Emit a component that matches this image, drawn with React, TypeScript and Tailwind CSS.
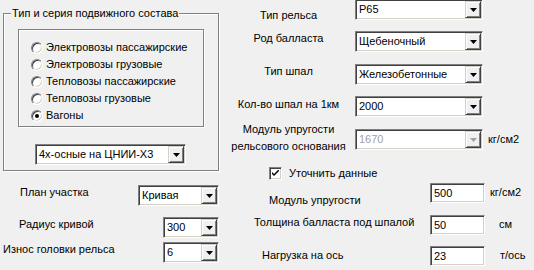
import type { ReactNode } from 'react'

const sunken =
  'border border-t-[#808080] border-l-[#808080] border-b-white border-r-white shadow-[inset_1px_1px_0_#404040,inset_-1px_-1px_0_#d4d0c8]'

function Arrow({ disabled }: { disabled?: boolean }) {
  return (
    <div className="flex h-full w-[16px] shrink-0 items-center justify-center border border-t-[#d4d0c8] border-l-[#d4d0c8] border-b-[#404040] border-r-[#404040] bg-[#f0f0f0] shadow-[inset_1px_1px_0_#fff,inset_-1px_-1px_0_#808080]">
      <svg width="7" height="4" viewBox="0 0 7 4">
        <path d="M0 0h7L3.5 4z" fill={disabled ? '#a0a0a0' : '#000'} />
      </svg>
    </div>
  )
}

function Combo({ value, width, disabled }: { value: string; width: string; disabled?: boolean }) {
  return (
    <div className={`flex h-[21px] ${width} shrink-0 bg-white p-[1px] ${sunken}`}>
      <div className={`flex flex-1 items-center pl-[2px] ${disabled ? 'text-[#a0a0a0]' : 'text-black'}`}>
        {value}
      </div>
      <Arrow disabled={disabled} />
    </div>
  )
}

function Edit({ value }: { value: string }) {
  return (
    <div className={`flex h-[20px] w-[55px] shrink-0 items-center bg-white pl-[3px] ${sunken}`}>{value}</div>
  )
}

function Radio({ label, checked }: { label: string; checked?: boolean }) {
  return (
    <div className="flex h-[17px] items-center">
      <div className="ml-[12px] flex h-[12px] w-[12px] items-center justify-center rounded-full border border-t-[#808080] border-l-[#808080] border-b-white border-r-white bg-white shadow-[inset_1px_1px_0_#404040,inset_-1px_-1px_0_#d4d0c8]">
        {checked && <div className="h-[4px] w-[4px] rounded-full bg-black" />}
      </div>
      <span className="ml-[3px]">{label}</span>
    </div>
  )
}

function Row({ children, className }: { children: ReactNode; className?: string }) {
  return <div className={`flex ${className ?? ''}`}>{children}</div>
}

export default function App() {
  return (
    <div
      className="flex h-[270px] w-[534px] overflow-hidden bg-[#f0f0f0] text-[11px] leading-[13px] text-black"
      style={{ fontFamily: '"Liberation Sans", Arial, sans-serif' }}
    >
      {/* left column */}
      <div className="flex w-[222px] shrink-0 flex-col">
        <div className="relative ml-[3px] mt-[13px] h-[158px] w-[216px] border border-[#808080] shadow-[inset_1px_1px_0_#fff,1px_1px_0_#fff]">
          <span className="absolute left-[7px] top-[-7px] bg-[#f0f0f0] px-[1px]">Тип и серия подвижного состава</span>
          <div className="ml-[14px] mt-[15px] flex h-[98px] w-[186px] flex-col border border-[#808080] pt-[9px] shadow-[inset_1px_1px_0_#fff,1px_1px_0_#fff]">
            <Radio label="Электровозы пассажирские" />
            <Radio label="Электровозы грузовые" />
            <Radio label="Тепловозы пассажирские" />
            <Radio label="Тепловозы грузовые" />
            <Radio label="Вагоны" checked />
          </div>
          <div className="ml-[31px] mt-[17px]">
            <Combo value="4х-осные на ЦНИИ-Х3" width="w-[151px]" />
          </div>
        </div>

        <Row className="mt-[14px] h-[21px]">
          <span className="ml-[20px] w-[118px] pt-[1px]">План участка</span>
          <Combo value="Кривая" width="w-[81px]" />
        </Row>
        <Row className="mt-[11px] h-[20px]">
          <span className="ml-[19px] w-[144px] pt-[1px]">Радиус кривой</span>
          <Combo value="300" width="w-[56px]" />
        </Row>
        <Row className="mt-[5px] h-[20px]">
          <span className="ml-[3px] w-[160px] pt-[1px]">Износ головки рельса</span>
          <Combo value="6" width="w-[56px]" />
        </Row>
      </div>

      {/* right column */}
      <div className="flex flex-1 flex-col">
        <Row className="-mt-[1px] h-[21px]">
          <span className="w-[133px] pt-[10px] text-center">Тип рельса</span>
          <Combo value="Р65" width="w-[128px]" />
        </Row>
        <Row className="mt-[11px] h-[21px]">
          <span className="w-[133px] pt-[1px] text-center">Род балласта</span>
          <Combo value="Щебеночный" width="w-[128px]" />
        </Row>
        <Row className="mt-[12px] h-[21px]">
          <span className="w-[133px] pt-[1px] text-center">Тип шпал</span>
          <Combo value="Железобетонные" width="w-[128px]" />
        </Row>
        <Row className="mt-[11px] h-[21px]">
          <span className="w-[133px] pt-[2px] text-center">Кол-во шпал на 1км</span>
          <Combo value="2000" width="w-[128px]" />
        </Row>
        <Row className="mt-[4px] items-start">
          <span className="w-[133px] text-center leading-[17px]">
            Модуль упругости
            <br />
            рельсового основания
          </span>
          <div className="mt-[8px] flex items-center">
            <Combo value="1670" width="w-[128px]" disabled />
            <span className="ml-[5px]">кг/см2</span>
          </div>
        </Row>

        <Row className="mt-[12px] items-center">
          <div className="ml-[47px] flex h-[13px] w-[13px] items-center justify-center bg-white border border-t-[#808080] border-l-[#808080] border-b-white border-r-white shadow-[inset_1px_1px_0_#404040,inset_-1px_-1px_0_#d4d0c8]">
            <svg width="7" height="7" viewBox="0 0 7 7">
              <path d="M0 2l2 2 5-5v2L2 6 0 4z" fill="#000" />
            </svg>
          </div>
          <span className="ml-[7px]">Уточнить данные</span>
        </Row>

        <Row className="mt-[3px] h-[20px]">
          <span className="ml-[47px] w-[161px] pt-[11px]">Модуль упругости</span>
          <Edit value="500" />
          <span className="ml-[5px] pt-[3px]">кг/см2</span>
        </Row>
        <Row className="mt-[12px] h-[20px]">
          <span className="ml-[32px] w-[176px] pt-[1px]">Толщина балласта под шпалой</span>
          <Edit value="50" />
          <span className="ml-[14px] pt-[3px]">см</span>
        </Row>
        <Row className="mt-[11px] h-[20px]">
          <span className="ml-[40px] w-[168px] pt-[3px]">Нагрузка на ось</span>
          <Edit value="23" />
          <span className="ml-[15px] pt-[3px]">т/ось</span>
        </Row>
      </div>
    </div>
  )
}
